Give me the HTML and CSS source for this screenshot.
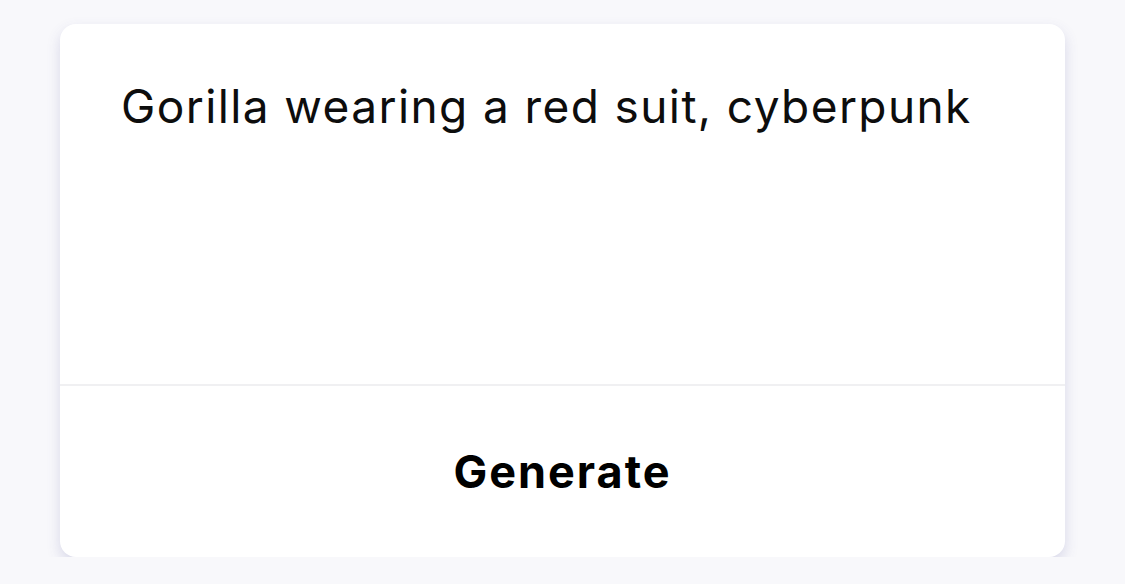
FILE: index.html
```html
<!DOCTYPE html>
<html>
<head>
<meta charset="utf-8">
<link rel="stylesheet" href="styles.css">
</head>
<body>
<div class="card">
  <div class="prompt">Gorilla wearing a red suit, cyberpunk</div>
  <div class="divider"></div>
  <div class="action">Generate</div>
</div>
</body>
</html>
```
FILE: styles.css
```css
html, body {
  margin: 0;
  padding: 0;
  background: #f8f8fb;
  font-family: Inter, "Liberation Sans", sans-serif;
}
body {
  padding: 24px 60px 0 60px;
}
.card {
  width: 1005px;
  height: 533px;
  background: #ffffff;
  border-radius: 16px;
  box-shadow: 0 6px 14px rgba(70, 70, 150, 0.18);
  display: flex;
  flex-direction: column;
  overflow: hidden;
}
.prompt {
  height: 360px;
  box-sizing: border-box;
  padding: 54px 40px 0 61px;
  font-size: 46px;
  letter-spacing: 1.4px;
  color: #0d0d0d;
  line-height: normal;
}
.divider {
  height: 2px;
  background: #f0f0f2;
}
.action {
  flex: 1;
  display: flex;
  align-items: center;
  justify-content: center;
  font-size: 45px;
  font-weight: 700;
  letter-spacing: 2px;
  color: #000;
}
```
